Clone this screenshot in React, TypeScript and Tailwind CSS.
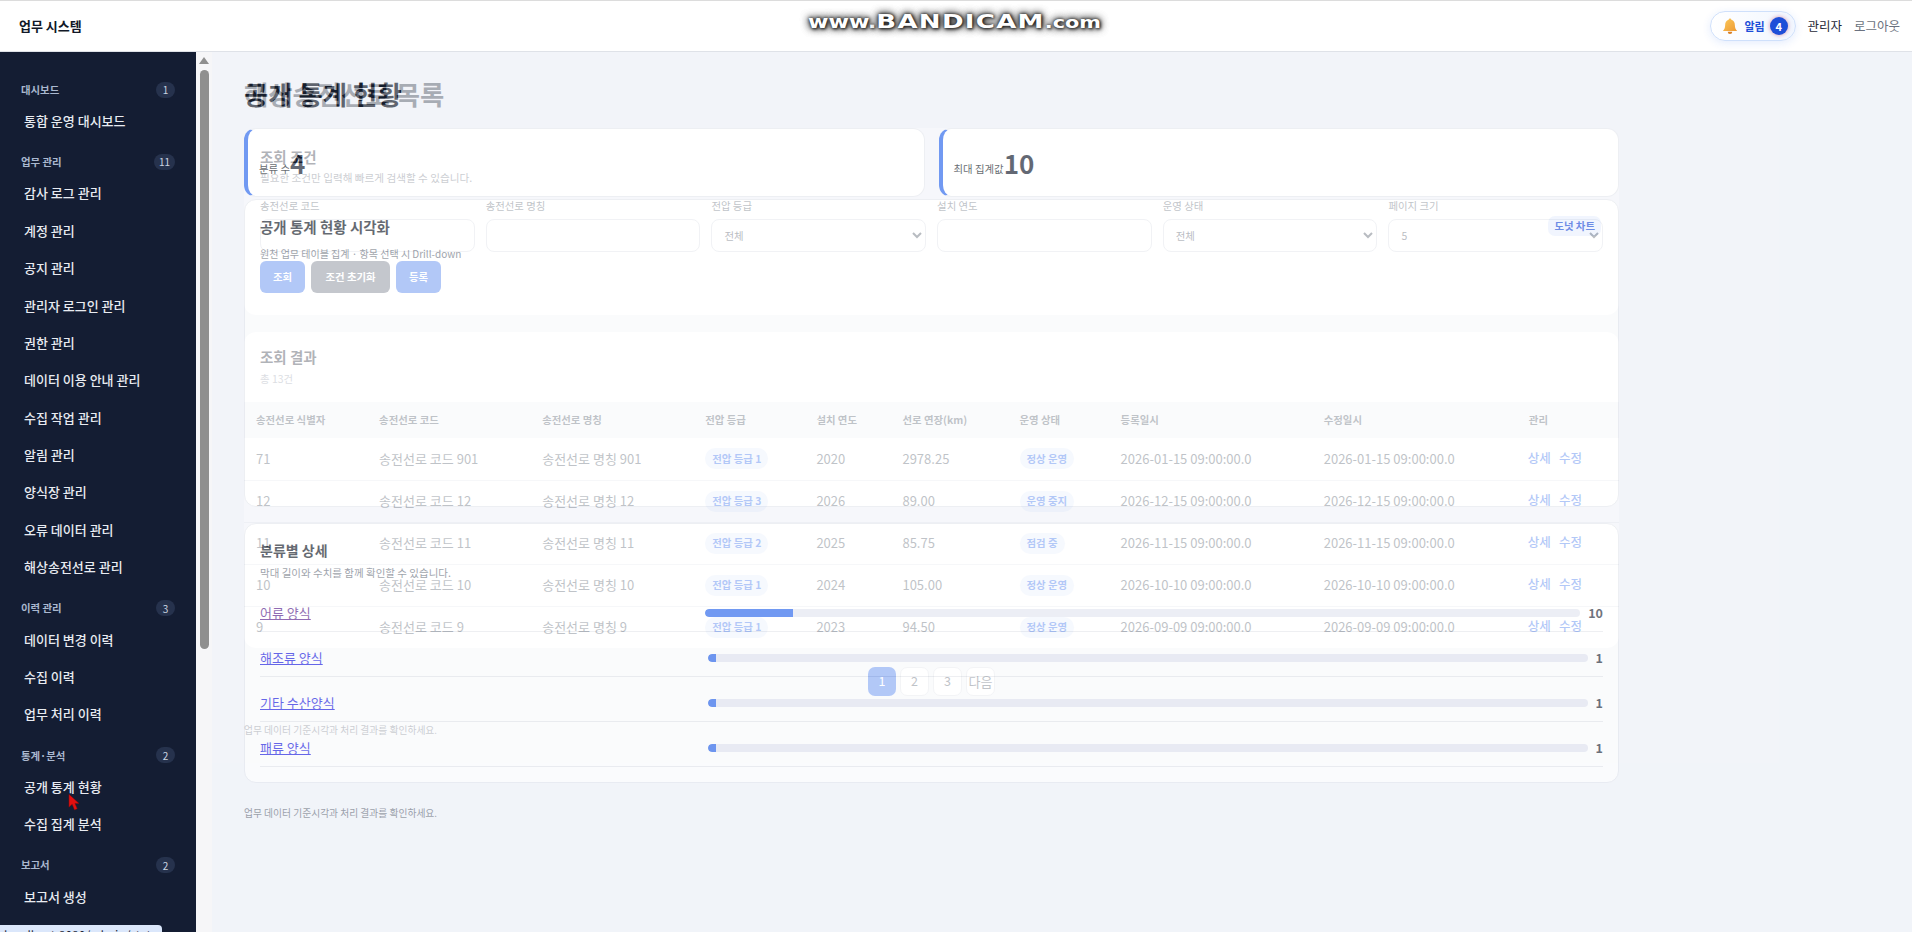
const groups = [
  { title: '대시보드', count: 1, items: ['통합 운영 대시보드'] },
  { title: '업무 관리', count: 11, items: ['감사 로그 관리', '계정 관리', '공지 관리', '관리자 로그인 관리', '권한 관리', '데이터 이용 안내 관리', '수집 작업 관리', '알림 관리', '양식장 관리', '오류 데이터 관리', '해상송전선로 관리'] },
  { title: '이력 관리', count: 3, items: ['데이터 변경 이력', '수집 이력', '업무 처리 이력'] },
  { title: '통계·분석', count: 2, items: ['공개 통계 현황', '수집 집계 분석'] },
  { title: '보고서', count: 2, items: ['보고서 생성'] },
]

const details = [
  { name: '어류 양식', value: 10, fill: 'w-[10%]', link: 'text-[#551a8b]' },
  { name: '해조류 양식', value: 1, fill: 'w-[8px]', link: 'text-[#1a1ae0]' },
  { name: '기타 수산양식', value: 1, fill: 'w-[8px]', link: 'text-[#1a1ae0]' },
  { name: '패류 양식', value: 1, fill: 'w-[8px]', link: 'text-[#1a1ae0]' },
]

const filters = [
  { label: '송전선로 코드' },
  { label: '송전선로 명칭' },
  { label: '전압 등급', option: '전체' },
  { label: '설치 연도' },
  { label: '운영 상태', option: '전체' },
  { label: '페이지 크기', option: '5' },
]

const columns = [
  { label: '송전선로 식별자', width: 'w-[123px]' },
  { label: '송전선로 코드', width: 'w-[163px]' },
  { label: '송전선로 명칭', width: 'w-[163px]' },
  { label: '전압 등급', width: 'w-[111px]' },
  { label: '설치 연도', width: 'w-[86px]' },
  { label: '선로 연장(km)', width: 'w-[117px]' },
  { label: '운영 상태', width: 'w-[101px]' },
  { label: '등록일시', width: 'w-[203px]' },
  { label: '수정일시', width: 'w-[205px]' },
  { label: '관리', width: 'w-[102px]' },
]

const rows = [
  { id: '71', code: '901', grade: '1', year: '2020', length: '2978.25', status: '정상 운영', date: '2026-01-15 09:00:00.0' },
  { id: '12', code: '12', grade: '3', year: '2026', length: '89.00', status: '운영 중지', date: '2026-12-15 09:00:00.0' },
  { id: '11', code: '11', grade: '2', year: '2025', length: '85.75', status: '점검 중', date: '2026-11-15 09:00:00.0' },
  { id: '10', code: '10', grade: '1', year: '2024', length: '105.00', status: '정상 운영', date: '2026-10-10 09:00:00.0' },
  { id: '9', code: '9', grade: '1', year: '2023', length: '94.50', status: '정상 운영', date: '2026-09-09 09:00:00.0' },
]

const Header = () => {
  return (
    <header className="h-[52px] shrink-0 bg-white border-t border-b border-t-[#dcdcdc] border-b-[#dfe2e8] flex items-center justify-between pl-[19px] pr-[12px]">
      <span className="text-[13px] font-bold text-[#111827]">업무 시스템</span>
      <div className="flex items-center">
        <button className="w-[86px] h-[30px] rounded-full border border-[#cfe0fb] bg-gradient-to-r from-white to-[#f1f6ff] shadow-[0_2px_8px_rgba(37,99,235,0.12)] flex items-center pl-[10px] gap-[5px]">
          <svg viewBox="0 0 24 24" className="w-[18px] h-[18px]">
            <defs>
              <linearGradient id="bell" x1="0" y1="0" x2="1" y2="1">
                <stop offset="0" stopColor="#fbc95a" />
                <stop offset="1" stopColor="#ee9a34" />
              </linearGradient>
            </defs>
            <path d="M12 2c-1 0-1.800.8-1.800 1.800C7 4.700 5.500 7.500 5.500 11c0 3.500-1 5.500-3 7.500h19c-2-2-3-4-3-7.500 0-3.500-1.500-6.300-4.700-7.200C13.800 2.800 13 2 12 2z" fill="url(#bell)" />
            <path d="M9 19.500a3 3 0 0 0 6 0z" fill="#d97f24" />
          </svg>
          <span className="text-[11px] font-bold text-[#1d4ed8]">알림</span>
          <span className="w-[18px] h-[18px] rounded-full bg-[#1d4ed8] text-white text-[11px] font-bold flex items-center justify-center shadow-[0_0_4px_rgba(190,80,120,0.6)]">4</span>
        </button>
        <span className="ml-[11px] text-[12.5px] text-[#1f2937]">관리자</span>
        <span className="ml-[12px] text-[12.5px] text-[#6b7280]">로그아웃</span>
      </div>
    </header>
  )
}

const Sidebar = () => {
  return (
    <aside className="w-[212px] shrink-0 flex bg-white overflow-hidden">
      <nav className="w-[196px] shrink-0 bg-[#141d33] pt-[28.500px] pl-[21px] pr-[21px] flex flex-col gap-[13.500px] overflow-hidden">
        {groups.map((group) => (
          <div key={group.title} className="shrink-0">
            <div className="h-[18px] flex items-center justify-between mb-[3.500px]">
              <span className="text-[10.4px] font-semibold text-[#aab8cf]">{group.title}</span>
              <span className="h-[16px] min-w-[19px] px-[5px] rounded-full bg-[#26324d] text-[#cbd5e1] text-[10px] flex items-center justify-center">{group.count}</span>
            </div>
            {group.items.map((item) => (
              <div key={item} className="h-[37.4px] pl-[3px] flex items-center text-[13px] font-medium text-[#e8ebf1] whitespace-nowrap">{item}</div>
            ))}
          </div>
        ))}
      </nav>
      <div className="w-[16px] shrink-0 flex flex-col items-center pt-[5px] bg-[#f6f6f8]">
        <div className="w-0 h-0 border-l-[5px] border-r-[5px] border-b-[7px] border-l-transparent border-r-transparent border-b-[#8f8f8f]" />
        <div className="w-[9px] h-[579px] mt-[6px] rounded-full bg-[#8f8f8f]" />
      </div>
    </aside>
  )
}

const StatCard = ({ label, value }: { label: string; value: string }) => {
  return (
    <div className="h-[69px] rounded-[12px] bg-white border border-[#e4e7ee] border-l-4 border-l-[#2563eb] pl-[11px] flex items-center">
      <span className="text-[10.4px] text-[#111827] mt-[13px]">{label}</span>
      <span className="text-[26px] font-bold leading-none text-[#0f172a] mt-[1px]">{value}</span>
    </div>
  )
}

const StatsPage = () => {
  return (
    <div className="pl-[32px] pt-[24px] w-[1407px]">
      <h1 className="text-[26.4px] font-bold leading-[36px] text-[#111827] mb-[16px]">공개 통계 현황</h1>
      <div className="grid grid-cols-2 gap-[14px]">
        <StatCard label="분류 수" value="4" />
        <StatCard label="최대 집계값" value="10" />
      </div>
      <section className="mt-[2px] h-[308px] rounded-[12px] bg-white border border-[#e4e7ee] px-[15px] pt-[16px]">
        <div className="flex items-start justify-between">
          <h2 className="text-[14.5px] font-semibold leading-[22px] text-[#111827]">공개 통계 현황 시각화</h2>
          <span className="h-[20px] px-[6px] mr-[2px] rounded-[7px] bg-[#eaf1fe] text-[10.4px] font-bold text-[#1d4ed8] flex items-center">도넛 차트</span>
        </div>
        <p className="mt-[8px] text-[10px] leading-[16px] text-[#6b7280]">원천 업무 테이블 집계 · 항목 선택 시 Drill-down</p>
      </section>
      <section className="mt-[16px] rounded-[12px] bg-white border border-[#e4e7ee] px-[15px] pt-[15px] pb-[15px]">
        <h2 className="text-[14px] font-semibold leading-[22px] text-[#111827]">분류별 상세</h2>
        <p className="mt-[4px] mb-[6px] text-[10.5px] leading-[16px] text-[#6b7280]">막대 길이와 수치를 함께 확인할 수 있습니다.</p>
        {details.map((row) => (
          <div key={row.name} className="grid grid-cols-[1fr_2fr_auto] gap-2 items-center pt-[17px] pb-[9px] border-b border-[#e5e7eb] h-[45px]">
            <a href="#" className={`text-[13px] underline leading-[18px] ${row.link}`}>{row.name}</a>
            <div className="h-[8px] rounded-full bg-[#e3e6f0] overflow-hidden">
              <div className={`h-full rounded-l-full bg-[#2563eb] ${row.fill}`} />
            </div>
            <span className="text-[12.5px] font-semibold text-[#1f2937] leading-[18px]">{row.value}</span>
          </div>
        ))}
      </section>
      <p className="mt-[22px] text-[9.750px] leading-[16px] text-[#6b7280]">업무 데이터 기준시각과 처리 결과를 확인하세요.</p>
    </div>
  )
}

const ListPage = () => {
  return (
    <div className="pl-[32px] pt-[24px] w-[1407px]">
      <h1 className="text-[26.4px] font-bold leading-[36px] text-[#1f2937] mb-[16px]">해상송전선로 목록</h1>
      <section className="h-[187px] rounded-[12px] bg-white px-[16px] pt-[18px]">
        <h2 className="text-[14.5px] font-semibold leading-[22px] text-[#1f2937]">조회 조건</h2>
        <p className="mt-[2px] text-[10.6px] leading-[16px] text-[#6b7280]">필요한 조건만 입력해 빠르게 검색할 수 있습니다.</p>
        <div className="mt-[12px] grid grid-cols-6 gap-[11.200px]">
          {filters.map((filter) => (
            <label key={filter.label} className="flex flex-col gap-[5px]">
              <span className="text-[10.4px] leading-[16px] text-[#4b5563]">{filter.label}</span>
              {filter.option ? (
                <select className="h-[33px] w-full rounded-[8px] border border-[#d8dce5] bg-white px-[8px] text-[10.4px] text-[#374151]">
                  <option>{filter.option}</option>
                </select>
              ) : (
                <input className="h-[33px] w-full rounded-[8px] border border-[#d8dce5] bg-white" />
              )}
            </label>
          ))}
        </div>
        <div className="mt-[9px] flex gap-[6px]">
          <button className="w-[45px] h-[32px] rounded-[6px] bg-[#2563eb] text-white text-[10.4px] font-bold">조회</button>
          <button className="w-[79px] h-[32px] rounded-[6px] bg-[#596273] text-white text-[10.4px] font-bold">조건 초기화</button>
          <button className="w-[45px] h-[32px] rounded-[6px] bg-[#2563eb] text-white text-[10.4px] font-bold">등록</button>
        </div>
      </section>
      <section className="mt-[17px] h-[316px] rounded-[12px] bg-white overflow-hidden">
        <div className="h-[70px] px-[16px] pt-[14px]">
          <h2 className="text-[14.5px] font-semibold leading-[22px] text-[#1f2937]">조회 결과</h2>
          <p className="mt-[3px] text-[10.4px] leading-[16px] text-[#9ca3af]">총 13건</p>
        </div>
        <table className="w-full table-fixed border-collapse">
          <thead>
            <tr className="h-[36px] bg-[#f3f5f9]">
              {columns.map((col) => (
                <th key={col.label} className={`${col.width} pl-[12px] text-left text-[10.4px] font-semibold text-[#4b5563]`}>{col.label}</th>
              ))}
            </tr>
          </thead>
          <tbody>
            {rows.map((row) => (
              <tr key={row.id} className="h-[42px] border-b border-[#e7eaf0] text-[13px] text-[#4b5563]">
                <td className="pl-[12px]">{row.id}</td>
                <td className="pl-[12px]">송전선로 코드 {row.code}</td>
                <td className="pl-[12px]">송전선로 명칭 {row.code}</td>
                <td className="pl-[12px]">
                  <span className="inline-flex h-[21px] items-center px-[7px] rounded-full bg-[#e6eefd] text-[10.4px] font-bold text-[#2563eb]">전압 등급 {row.grade}</span>
                </td>
                <td className="pl-[12px]">{row.year}</td>
                <td className="pl-[12px]">{row.length}</td>
                <td className="pl-[12px]">
                  <span className="inline-flex h-[21px] items-center px-[7px] rounded-full bg-[#e6eefd] text-[10.4px] font-bold text-[#2563eb]">{row.status}</span>
                </td>
                <td className="pl-[12px]">{row.date}</td>
                <td className="pl-[12px]">{row.date}</td>
                <td className="pl-[11px] pb-[1px] text-[12.5px] text-[#2563eb] font-medium">
                  <span className="mr-[8px]">상세</span>
                  <span>수정</span>
                </td>
              </tr>
            ))}
          </tbody>
        </table>
      </section>
      <div className="mt-[19px] flex justify-center gap-[4px]">
        <button className="w-[28px] h-[29px] rounded-[7px] bg-[#2563eb] text-white text-[12.5px]">1</button>
        <button className="w-[29px] h-[29px] rounded-[7px] border border-[#dfe2e8] bg-white text-[12.5px] text-[#4b5563]">2</button>
        <button className="w-[29px] h-[29px] rounded-[7px] border border-[#dfe2e8] bg-white text-[12.5px] text-[#4b5563]">3</button>
        <button className="w-[29px] h-[29px] rounded-[7px] border border-[#dfe2e8] bg-white text-[13px] text-[#4b5563]">다음</button>
      </div>
      <p className="mt-[26px] text-[9.750px] leading-[16px] text-[#6b7280]">업무 데이터 기준시각과 처리 결과를 확인하세요.</p>
    </div>
  )
}

const App = () => {
  return (
    <div className="relative h-screen overflow-hidden flex flex-col bg-[#f2f4f9] font-['Noto_Sans_CJK_KR','Noto_Sans',sans-serif]">
      <Header />
      <div className="flex flex-1 min-h-0">
        <Sidebar />
        <main className="relative flex-1 min-w-0 overflow-hidden bg-[#f2f4f9]">
          <StatsPage />
          {/* old page still fading out over the new one */}
          <div className="absolute inset-0 bg-[#f2f4f9] opacity-35 pointer-events-none">
            <ListPage />
          </div>
        </main>
      </div>

      {/* screen recorder watermark */}
      <div className="absolute left-[808px] top-[6px] w-[293px] h-[30px] flex items-baseline justify-center scale-x-[1.3] font-['DejaVu_Sans',sans-serif] font-bold text-white [text-shadow:0_0_3px_#222,1px_1px_3px_#222,0_0_7px_#444,0_0_7px_#444] pointer-events-none whitespace-nowrap">
        <span className="text-[17px]">www.</span>
        <span className="text-[20px] tracking-[1px]">BANDICAM</span>
        <span className="text-[16px]">.com</span>
      </div>

      {/* mouse cursor */}
      <svg viewBox="0 0 14 20" className="absolute left-[68px] top-[793px] w-[13px] h-[19px]">
        <path d="M1 1v14l3.500-3 2.500 6 3-1.300-2.500-5.700H12z" fill="#e11010" stroke="#7a0a0a" strokeWidth="0.5" />
      </svg>

      {/* browser status bubble */}
      <div className="absolute left-0 bottom-0 w-[162px] h-[7px] overflow-hidden rounded-tr-[4px] bg-[#dbe7fb] pt-[3px] text-[12px] leading-[14px] text-[#1f2937] pl-[4px] whitespace-nowrap">localhost:8080/admin/stats</div>
    </div>
  )
}

export default App
